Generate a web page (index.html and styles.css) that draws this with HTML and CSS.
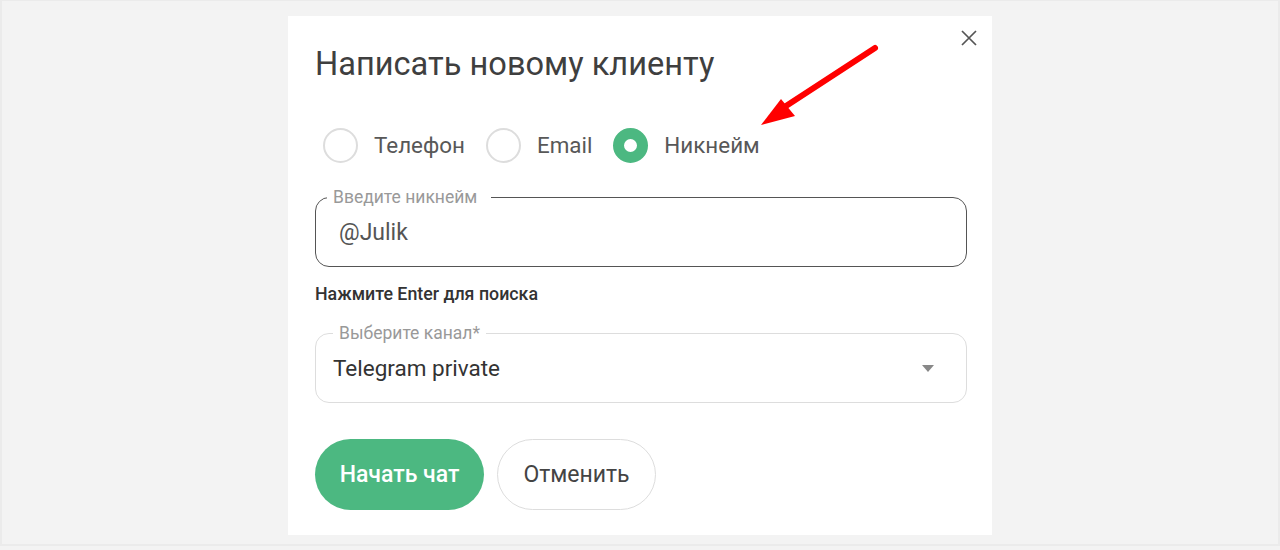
FILE: index.html
```html
<!DOCTYPE html>
<html lang="ru">
<head>
    <meta charset="UTF-8">
    <meta name="viewport" content="width=device-width, initial-scale=1.0">
    <title>Написать новому клиенту</title>
    <link rel="stylesheet" href="styles.css">
</head>
<body>
    <div class="dialog">
        <button class="close" type="button" aria-label="Закрыть">
            <svg width="16" height="16" viewBox="0 0 16 16"><path d="M1 1L15 15M15 1L1 15" stroke="#555" stroke-width="1.7" fill="none"/></svg>
        </button>

        <h1 class="title">Написать новому клиенту</h1>

        <div class="radios">
            <label class="radio"><span class="dot"></span>Телефон</label>
            <label class="radio"><span class="dot"></span>Email</label>
            <label class="radio checked"><span class="dot"></span>Никнейм</label>
        </div>

        <fieldset class="field field-active">
            <legend>Введите никнейм</legend>
            <div class="value">@Julik</div>
        </fieldset>
        <div class="hint">Нажмите Enter для поиска</div>

        <fieldset class="field field-select">
            <legend>Выберите канал*</legend>
            <div class="value">Telegram private</div>
            <span class="caret"></span>
        </fieldset>

        <div class="actions">
            <button class="btn btn-primary" type="button">Начать чат</button>
            <button class="btn btn-ghost" type="button">Отменить</button>
        </div>

        <!-- annotation arrow -->
        <svg class="arrow" width="140" height="100" viewBox="0 0 140 100">
            <path d="M115 4L26 62" stroke="#f00" stroke-width="6" stroke-linecap="round" fill="none"/>
            <path d="M1 81L21 55L35 72Z" fill="#f00"/>
        </svg>
    </div>
</body>
</html>
```

FILE: styles.css
```css
body {
    margin: 0;
    min-height: 546px;
    padding-top: 16px;
    box-sizing: border-box;
    background: #f3f3f3;
    border: 2px solid #ebebeb;
    border-top-width: 1px;
    font-family: Roboto, "Noto Sans", sans-serif;
    color: #333;
}
.dialog {
    position: relative;
    width: 704px;
    margin: -1px auto 0;
    padding: 28px 25px 25px 27px;
    box-sizing: border-box;
    background: #fff;
}
.close {
    position: absolute;
    top: 14px;
    right: 15px;
    padding: 0;
    border: none;
    background: none;
    cursor: pointer;
}
.title {
    margin: 0;
    font-size: 32.6px;
    line-height: 40px;
    font-weight: 400;
    color: #3f3f3f;
}
.radios {
    display: flex;
    align-items: center;
    margin-top: 43px;
    margin-left: 8px;
    height: 36px;
}
.radio {
    display: flex;
    align-items: center;
    gap: 16px;
    margin-right: 21px;
    font-size: 22.4px;
    color: #585858;
}
.dot {
    width: 35px;
    height: 35px;
    box-sizing: border-box;
    border: 2px solid #ddd;
    border-radius: 50%;
}
.radio.checked .dot {
    border: 11px solid #4cb881;
    background: #fff;
}
.field {
    position: relative;
    margin: 25px 0 0;
    border: 1px solid #ddd;
    border-radius: 14px;
}
.field legend {
    padding: 0 14px 0 6px;
    font-size: 17.5px;
    line-height: 18px;
    color: #999;
}
.value {
    font-size: 22.5px;
    line-height: 24px;
    color: #444;
}
.field-active {
    border-color: #555;
    padding: 15px 24px 21px 11px;
}
.field-active .value {
    margin-left: 12px;
    font-size: 23px;
    color: #555;
}
.hint {
    margin-top: 18px;
    font-size: 17.8px;
    line-height: 18px;
    font-weight: 500;
    color: #333;
}
.field-select {
    margin-top: 21px;
    padding: 14px 24px 22px 17px;
}
.field-select legend {
    padding: 0 6px;
}
.field-select .value {
    color: #333;
}
.caret {
    position: absolute;
    right: 32px;
    top: 23px;
    border-left: 6px solid transparent;
    border-right: 6px solid transparent;
    border-top: 7px solid #888;
}
.actions {
    display: flex;
    gap: 13px;
    margin-top: 36px;
}
.btn {
    height: 71px;
    border-radius: 36px;
    font-family: inherit;
    font-size: 23px;
    cursor: pointer;
}
.btn-primary {
    width: 169px;
    border: none;
    background: #4cb881;
    color: #fff;
    font-weight: 500;
}
.btn-ghost {
    width: 159px;
    border: 1px solid #ddd;
    background: #fff;
    color: #444;
}
.arrow {
    position: absolute;
    left: 472px;
    top: 28px;
}
```
